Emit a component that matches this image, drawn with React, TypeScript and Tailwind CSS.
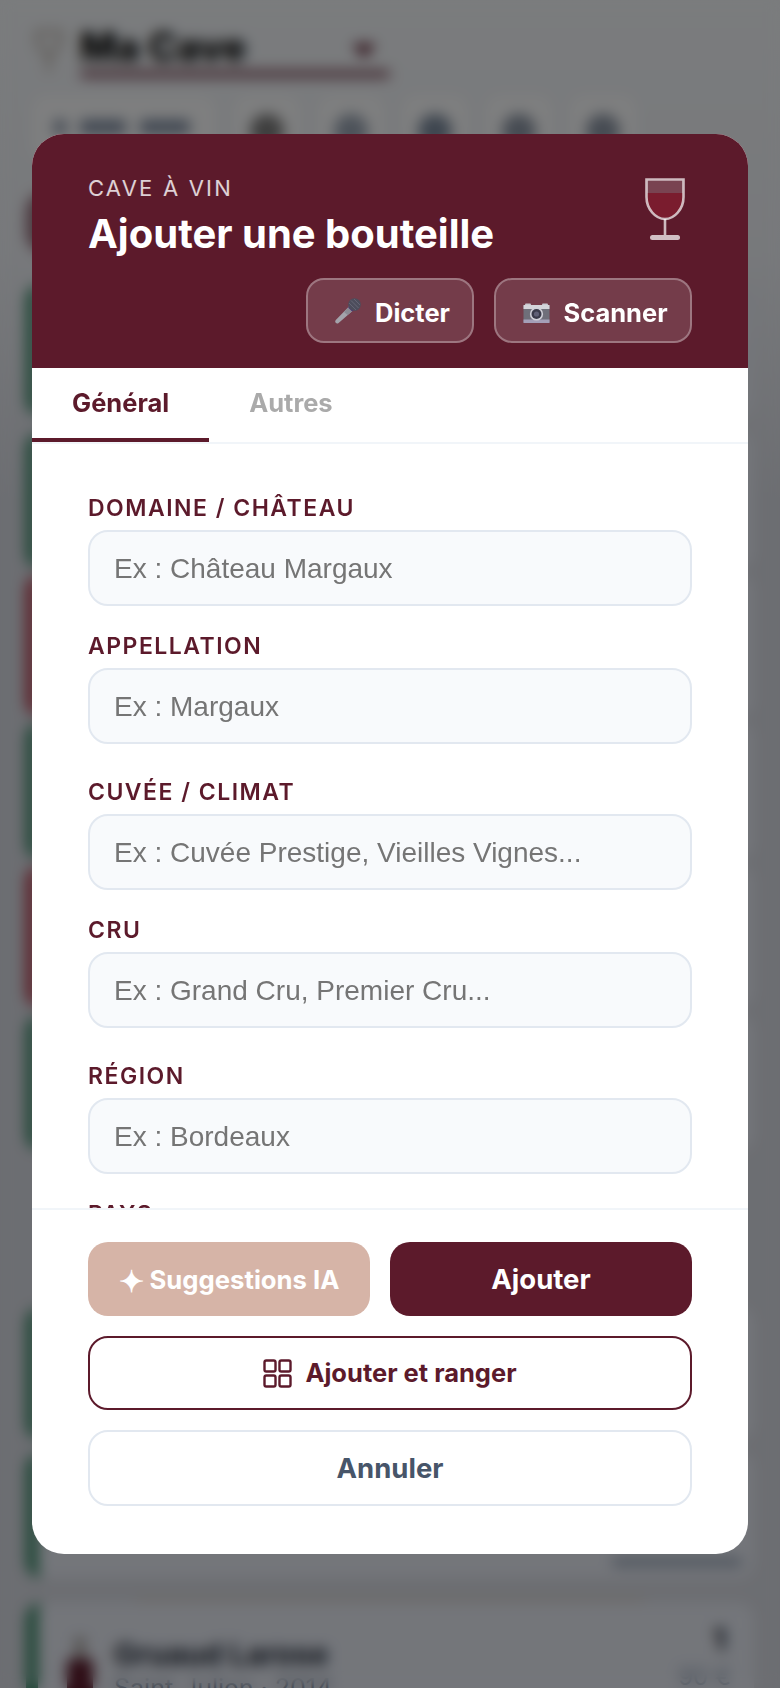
function Field({ label, placeholder }: { label: string; placeholder: string }) {
  return (
    <label className="flex flex-col">
      <span className="mb-[10px] h-[26px] pt-[1px] text-[23px] leading-[26px] font-semibold tracking-[0.065em] text-[#5c1a2b] font-['Inter',sans-serif]">
        {label}
      </span>
      <input
        readOnly
        placeholder={placeholder}
        className="h-[76px] w-full rounded-[20px] border-2 border-[#e2e8f0] bg-[#f8fafc] px-[24px] pt-[2px] text-[28px] font-['Liberation_Sans',Arial,sans-serif] outline-none placeholder:text-[#757575]"
      />
    </label>
  );
}

function WineGlass() {
  return (
    <svg width="44" height="64" viewBox="0 0 44 64" fill="none" aria-hidden="true">
      <path d="M4.5 16 H39.5 V20 C39.5 32 31 41 22 41 C13 41 4.5 32 4.5 20 Z" fill="#7a1c2e" />
      <path d="M4 3.5 H40 V16 H4 Z" fill="#ffffff" fillOpacity="0.18" />
      <path d="M3.5 2.5 H40.5 V20 C40.5 32 31.5 42 22 42 C12.5 42 3.5 32 3.5 20 Z" stroke="#ffffff" strokeOpacity="0.7" strokeWidth="2.6" />
      <path d="M22 42 V58" stroke="#ffffff" strokeOpacity="0.7" strokeWidth="2.6" />
      <rect x="7" y="58" width="30" height="5" rx="2.5" fill="#ffffff" fillOpacity="0.72" />
    </svg>
  );
}

function MicIcon() {
  return (
    <svg width="26" height="26" viewBox="0 0 26 26" aria-hidden="true">
      <path d="M14 8.5 L18 12.5 L3.6 25 C2.6 25.8 1.4 25.6 0.7 24.8 C0 24 0 23 0.8 22.1 Z" fill="#a3a3ab" />
      <path d="M14 8.5 L9 14 L12.5 17 L18 12.5 Z" fill="#8b8b94" />
      <path d="M13.2 9.4 L17.2 13.4 L19 11.8 L14.8 7.6 Z" fill="#4a2f7a" />
      <circle cx="19.5" cy="6.5" r="6.3" fill="#4d4d5c" />
      <path d="M16 2.5 L23.5 10 M19 1 L25 7 M14 5 L21 12" stroke="#6b6b7a" strokeWidth="0.8" />
    </svg>
  );
}

function CameraIcon() {
  return (
    <svg width="27" height="20" viewBox="0 0 27 20" aria-hidden="true">
      <rect x="2" y="0.5" width="6" height="3" rx="1" fill="#c9c9d0" />
      <rect x="19" y="0.5" width="6" height="3" rx="1" fill="#c9c9d0" />
      <rect x="0.5" y="2" width="26" height="18" rx="1.5" fill="#6f6f7a" />
      <rect x="0.5" y="2" width="26" height="4" fill="#d4d4da" />
      <rect x="0.5" y="16.5" width="26" height="3.5" fill="#a49fb8" />
      <circle cx="13.5" cy="11" r="6.6" fill="#d0d0d8" />
      <circle cx="13.5" cy="11" r="5" fill="#3a3a4a" />
      <circle cx="13.5" cy="11" r="2.6" fill="#5f5f75" />
    </svg>
  );
}

function GridIcon() {
  return (
    <svg width="29" height="29" viewBox="0 0 29 29" fill="none" stroke="#5c1a2b" strokeWidth="2.4" aria-hidden="true">
      <rect x="1.5" y="1.5" width="11" height="11" rx="1.8" />
      <rect x="16.5" y="1.5" width="11" height="11" rx="1.8" />
      <rect x="1.5" y="16.5" width="11" height="11" rx="1.8" />
      <rect x="16.5" y="16.5" width="11" height="11" rx="1.8" />
    </svg>
  );
}

function Card({ className, bar }: { className: string; bar: string }) {
  return <div className={`w-full rounded-[16px] border-l-[12px] bg-[#e8ecf5] ${bar} ${className}`} />;
}

function Background() {
  return (
    <div className="h-[1688px] overflow-hidden bg-[linear-gradient(180deg,#f5f8fb_0px,#eff2f7_250px,#d9dce4_500px,#d9dce4_100%)] px-[26px] font-['Inter',sans-serif]">
      <div className="flex h-[96px] items-start gap-[16px] pt-[26px]">
        <svg width="30" height="44" viewBox="0 0 30 44" fill="none" stroke="#a89a8c" strokeWidth="3" className="mt-[4px] ml-[8px]" aria-hidden="true">
          <path d="M3 2 H27 C27 16 22 24 15 24 C8 24 3 16 3 2 Z M15 24 V42" />
        </svg>
        <div className="flex w-[310px] flex-col">
          <div className="flex h-[42px] items-center justify-between pr-[14px]">
            <span className="text-[39px] leading-[42px] font-extrabold text-black">Ma Cave</span>
            <span className="mt-[8px] h-0 w-0 border-x-[12px] border-t-[14px] border-x-transparent border-t-[#5c1a2b]" />
          </div>
          <div className="mt-[2px] h-[8px] rounded bg-[#5c1a2b]/70" />
        </div>
      </div>
      <div className="flex gap-[18px] pl-[6px]">
        <div className="flex h-[64px] w-[184px] items-start gap-[14px] rounded-[14px] bg-[#fdfeff] pt-[24px] pl-[22px]">
          <div className="h-[14px] w-[12px] rounded bg-[#7c8aa0]" />
          <div className="h-[14px] w-[46px] rounded bg-[#7c8aa0]" />
          <div className="h-[14px] w-[50px] rounded bg-[#7c8aa0]" />
        </div>
        {["#7d7d7d", "#9aa5b4", "#7d8c9f", "#8d97a6", "#8d97a6"].map((c, i) => (
          <div key={i} className="flex h-[64px] w-[66px] items-start justify-center rounded-[14px] bg-[#fdfeff] pt-[18px]">
            <div className="h-[34px] w-[34px] rounded-full" style={{ backgroundColor: c }} />
          </div>
        ))}
      </div>
      <div className="mt-[32px] h-[61px] w-[680px] rounded-[20px] bg-[#5c1a2b]/60" />
      <div className="mt-[31px] flex flex-col">
        <Card className="h-[132px]" bar="border-l-[#3a8a68]" />
        <Card className="mt-[16px] h-[137px]" bar="border-l-[#3a8a68]" />
        <Card className="mt-[5px] h-[143px]" bar="border-l-[#b83a4b]" />
        <Card className="mt-[5px] h-[138px]" bar="border-l-[#3a8a68]" />
        <Card className="mt-[5px] h-[143px]" bar="border-l-[#b83a4b]" />
        <Card className="mt-[7px] h-[136px]" bar="border-l-[#3a8a68]" />
        <div className="h-[156px]" />
        <Card className="h-[133px]" bar="border-l-[#3a8a68]" />
        <div className="mt-[13px] flex h-[125px] w-full flex-col rounded-[16px] border-l-[12px] border-l-[#3a8a68] bg-[#e8ecf5]">
          <div className="mt-[104px] mr-[12px] ml-auto h-[10px] w-[130px] rounded bg-[#a3afc0]" />
        </div>
        <div className="mx-[110px] mt-[21px] h-[2px] bg-[#d9b98a]/60" />
        <div className="mt-[2px] flex h-[120px] w-full gap-[20px] rounded-[16px] border-l-[12px] border-l-[#3a8a68] bg-[#e8ecf5] pr-[23px] pl-[28px]">
          <div className="flex w-[28px] flex-col items-center pt-[34px]">
            <div className="h-[22px] w-[10px] bg-[#a8a29e]" />
            <div className="h-[40px] w-[26px] rounded-t bg-[#5c1a2b]" />
          </div>
          <div className="flex flex-1 flex-col pt-[33px]">
            <span className="text-[30px] leading-[36px] font-bold text-[#1f2937]">Gruaud Larose</span>
            <span className="text-[25px] leading-[32px] text-[#64748b]">Saint-Julien · 2014</span>
          </div>
          <div className="flex flex-col items-end pt-[18px]">
            <span className="mr-[5px] text-[30px] leading-[36px] font-bold text-[#111827]">1</span>
            <span className="mt-[6px] text-[24px] leading-[28px] text-[#94a3b8]">90 €</span>
          </div>
        </div>
      </div>
    </div>
  );
}

export default function App() {
  return (
    <div className="relative h-[1688px] w-full overflow-hidden font-['Inter',sans-serif]">
      <Background />
      <div className="absolute inset-0 flex items-center justify-center bg-black/50 backdrop-blur-[7px]">
        <div className="flex h-[1420px] w-[716px] flex-col overflow-hidden rounded-[32px] bg-white">
          <header className="flex h-[234px] shrink-0 flex-col bg-[#5c1a2b] px-[56px] pt-[42px]">
            <div className="flex items-start justify-between">
              <div className="flex flex-col">
                <span className="text-[22px] leading-[24px] tracking-[0.1em] text-white/80">CAVE À VIN</span>
                <h1 className="mt-[10px] text-[40px] leading-[48px] font-bold text-white">Ajouter une bouteille</h1>
              </div>
              <div className="mt-[1px] mr-[5px]">
                <WineGlass />
              </div>
            </div>
            <div className="mt-[20px] flex justify-end gap-[20px]">
              <button className="flex h-[65px] w-[168px] items-center justify-center gap-[14px] rounded-[18px] border-2 border-white/30 bg-white/15 pl-[5px] text-[25.5px] font-bold text-white">
                <MicIcon />
                <span className="pt-[5px]">Dicter</span>
              </button>
              <button className="flex h-[65px] w-[198px] items-center justify-center gap-[13px] rounded-[18px] border-2 border-white/30 bg-white/15 pl-[5px] text-[25.5px] font-bold text-white">
                <span className="pt-[5px]">
                  <CameraIcon />
                </span>
                <span className="pt-[5px]">Scanner</span>
              </button>
            </div>
          </header>

          <nav className="flex h-[76px] shrink-0 border-b-2 border-[#f1f5f9]">
            <div className="flex h-[74px] items-center border-b-[4px] border-[#5c1a2b] px-[40px] text-[25.5px] font-bold text-[#5c1a2b]">Général</div>
            <div className="flex h-[74px] items-center px-[40px] pb-[4px] text-[25.5px] font-bold text-[#aaaaaa]">Autres</div>
          </nav>

          <main className="min-h-0 flex-1 overflow-hidden px-[56px] pt-[50px]">
            <div className="flex flex-col gap-[34px]">
              <div className="flex flex-col gap-[26px]">
                <Field label="DOMAINE / CHÂTEAU" placeholder="Ex : Château Margaux" />
                <Field label="APPELLATION" placeholder="Ex : Margaux" />
              </div>
              <div className="flex flex-col gap-[26px]">
                <Field label="CUVÉE / CLIMAT" placeholder="Ex : Cuvée Prestige, Vieilles Vignes..." />
                <Field label="CRU" placeholder="Ex : Grand Cru, Premier Cru..." />
              </div>
              <div className="flex flex-col gap-[26px]">
                <Field label="RÉGION" placeholder="Ex : Bordeaux" />
                <Field label="PAYS" placeholder="Ex : France" />
              </div>
            </div>
          </main>

          <footer className="flex shrink-0 flex-col gap-[20px] border-t-2 border-[#f1f5f9] px-[56px] pt-[32px] pb-[48px]">
            <div className="flex gap-[20px]">
              <button className="flex h-[74px] w-[282px] items-center justify-center gap-[6px] rounded-[20px] bg-[#d6b4a7] pt-[3px] text-[25.7px] font-bold text-white">
                <span className="text-[30px] leading-none">✦</span>
                <span>Suggestions IA</span>
              </button>
              <button className="h-[74px] flex-1 rounded-[20px] bg-[#5c1a2b] pt-[2px] text-[27.5px] font-bold text-white">Ajouter</button>
            </div>
            <button className="flex h-[74px] items-center justify-center gap-[13px] rounded-[20px] border-2 border-[#5c1a2b] bg-white text-[25.5px] font-bold text-[#5c1a2b]">
              <GridIcon />
              <span>Ajouter et ranger</span>
            </button>
            <button className="h-[76px] rounded-[20px] border-2 border-[#e2e8f0] bg-white pt-[2px] text-[27.5px] font-bold text-[#475569]">Annuler</button>
          </footer>
        </div>
      </div>
    </div>
  );
}
